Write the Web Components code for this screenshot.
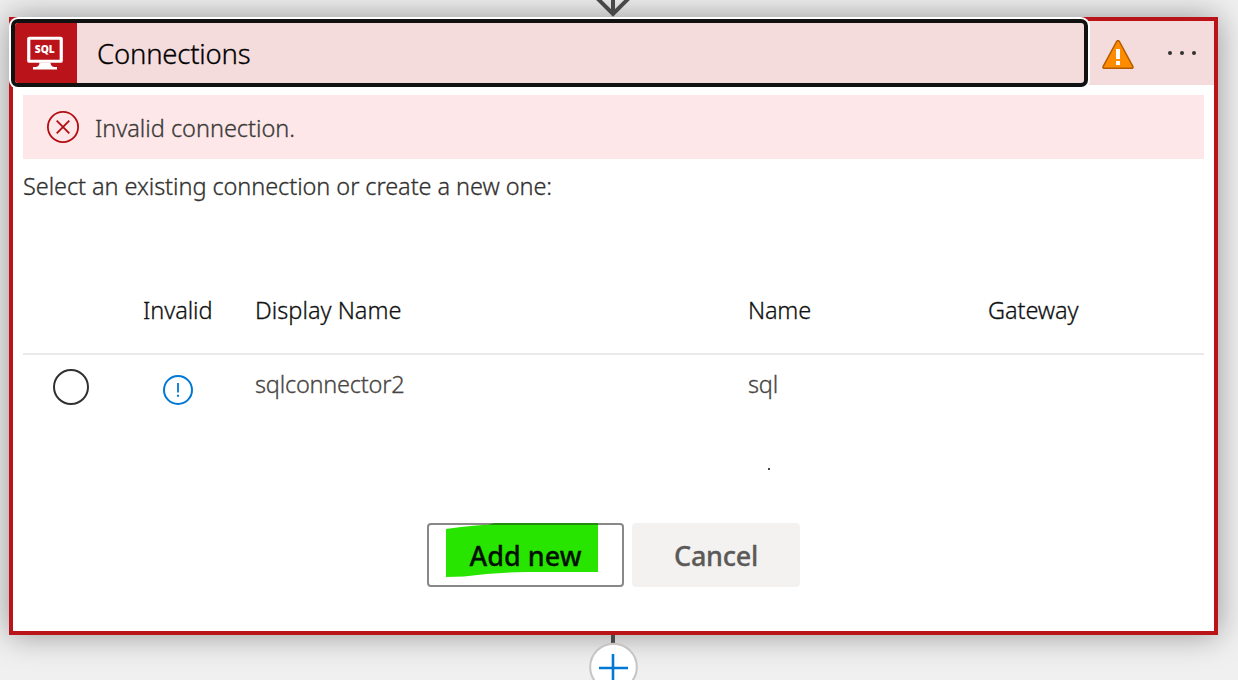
<!DOCTYPE html>
<html lang="en">
<head>
<meta charset="utf-8">
<title>Connections</title>
<style>
html,body{margin:0;height:680px;overflow:hidden;background:#f0f0f0}
body{font-family:"Noto Sans","Open Sans",sans-serif;color:#323130}
</style>
</head>
<body>
<flow-canvas></flow-canvas>
<script>
const define = (name, html, setup) => customElements.define(name, class extends HTMLElement {
  connectedCallback() {
    if (this.shadowRoot) return;
    const t = document.createElement('template');
    t.innerHTML = html;
    this.attachShadow({mode: 'open'}).appendChild(t.content.cloneNode(true));
    if (setup) setup(this);
  }
});

/* A single line label; its tracking is spread so that it takes the given width. */
define('ui-label', `<style>
  :host{display:block;white-space:pre;font-size:23.5px;line-height:32px;font-weight:300;-webkit-text-stroke:.3px currentColor}
  :host([size=l]){font-size:27.5px;line-height:36px}
  :host([size=b]){font-size:27px;line-height:36px;font-weight:500}
  span{display:inline-block}
</style><span><slot></slot></span>`, el => {
  const s = el.shadowRoot.querySelector('span');
  const w = parseFloat(el.getAttribute('width'));
  if (w) s.style.letterSpacing = (w - s.getBoundingClientRect().width) / el.textContent.length + 'px';
});

define('sql-icon', `<style>:host{display:block;width:62px;height:60px;background:#ba141a}svg{display:block}
  text{font:800 10.5px "Open Sans","Noto Sans",sans-serif;fill:#fff}</style>
  <svg width="62" height="60" viewBox="15 23 62 60">
    <rect x="28.75" y="38.25" width="32.5" height="23" rx=".6" fill="none" stroke="#fff" stroke-width="3.2"/>
    <path d="M39.5 62.5H50.5Q50.6 66.2 54 67H57V69.5H33V67H36Q39.400 66.200 39.500 62.500Z" fill="#fff"/>
    <text x="34.800" y="53" textLength="20" lengthAdjust="spacingAndGlyphs">SQL</text>
  </svg>`);

define('warning-icon', `<style>:host{display:block;width:32px;height:30px}svg{display:block}</style>
  <svg width="32" height="30" viewBox="1102 40 32 30">
    <path d="M1116.6 41.500Q1118 39.600 1119.400 41.500L1132.800 66.300Q1133.500 68.200 1131.500 68.300H1104.500Q1102.500 68.200 1103.200 66.300Z" fill="#ff8c00" stroke="#b35a00" stroke-width="1.5" stroke-linejoin="round"/>
    <path d="M1116 49h4v10h-4zM1116 61h4v4h-4z" fill="#fff"/>
  </svg>`);

define('more-icon', `<style>:host{display:block;width:30px;height:6px}svg{display:block}</style>
  <svg width="30" height="6"><g fill="#323130"><circle cx="3" cy="3" r="2"/><circle cx="15" cy="3" r="2"/><circle cx="27" cy="3" r="2"/></g></svg>`);

define('card-header', `<style>
  :host{display:flex;height:64px;align-items:center;background:#f4dcdc}
  .title{box-sizing:border-box;width:1077px;height:68px;margin-left:-2px;flex:none;display:flex;border:4px solid #111;border-radius:7px;box-shadow:0 0 0 2px #fff;background:#f4dcdc;overflow:hidden;position:relative;color:#000}
  ui-label{margin:13px 0 0 20px}
  warning-icon{margin:4px 0 0 14px}
  more-icon{margin:0 0 0 33px}
</style>
<div class="title"><sql-icon></sql-icon><ui-label size="l" width="153.5">Connections</ui-label></div>
<warning-icon></warning-icon><more-icon></more-icon>`);

define('error-bar', `<style>
  :host{display:flex;align-items:center;height:64px;background:#fde7e9;color:#3b3a39}
  svg{margin-left:23px}slot{display:block;margin:2px 0 0 15px}
</style>
<svg width="34" height="34"><g fill="none" stroke="#b30c10" stroke-width="1.800"><circle cx="17" cy="17" r="15.100"/><path d="M10.700 10.700L23.300 23.300M23.300 10.700L10.700 23.300"/></g></svg>
<slot></slot>`);

define('connection-table', `<style>
  :host{display:block;padding-top:67px}
  .row{display:grid;grid-template-columns:120px 112px 493px 240px 1fr}
  .head{color:#111;height:86px;border-bottom:2px solid #eaeaea;padding-top:25px;box-sizing:border-box}
  .body{height:168px;color:#484644;padding-top:13px;box-sizing:border-box}
  .radio{display:block;margin-left:29px}
  .info{margin:6px 0 0 19px;display:block}
  .dot{width:2px;height:2px;margin:68px 0 0 20px;background:#444}
</style>
<div class="row head"><span></span><ui-label width="69.5">Invalid</ui-label><ui-label width="146.500">Display Name</ui-label><ui-label width="63">Name</ui-label><ui-label width="90.500">Gateway</ui-label></div>
<div class="row body">
  <svg class="radio" width="38" height="38"><circle cx="19" cy="19" r="17" fill="none" stroke="#323130" stroke-width="2"/></svg>
  <svg class="info" width="32" height="32"><circle cx="16" cy="16" r="14" fill="none" stroke="#0078d4" stroke-width="2"/><path d="M15.100 9h1.800v9.500h-1.800zM15 20.800h2v2h-2z" fill="#0078d4"/></svg>
  <ui-label width="149.500">sqlconnector2</ui-label>
  <div><ui-label width="30">sql</ui-label><div class="dot"></div></div><span></span>
</div>`);

define('ui-button', `<style>
  :host{box-sizing:border-box;position:relative;display:flex;align-items:center;justify-content:center;height:64px;width:168px;border-radius:4px;background:#f3f2f1;color:#5c5a58}
  :host([outlined]){width:197px;background:#fff;border:2px solid #8a8886;color:#001000}
  slot{display:block}slot[name=mark]{position:absolute;left:17px;top:-2px}
  slot:not([name]){position:relative;padding-top:2px}
</style><slot name="mark"></slot><slot></slot>`);

define('marker-stroke', `<style>:host{display:block}svg{display:block}</style>
<svg width="152" height="56"><path d="M0 6Q30 1.500 60 1H152V49H80Q48 49.500 18 53.600L0 54Z" fill="#28e500"/><path d="M48 0H152V2H42Z" fill="#278a10"/></svg>`);

define('connection-card', `<style>
  :host{display:block;box-sizing:border-box;width:1209px;height:618px;border:4px solid #ba141a;background:#fff;box-shadow:0 0 30px rgba(0,0,0,.38)}
  main{padding:10px 10px 0}
  .prompt{margin-top:11px}
  footer{display:flex;gap:8px;margin-left:404px}
</style>
<card-header></card-header>
<main><error-bar><ui-label width="200">Invalid connection.</ui-label></error-bar>
<ui-label class="prompt" width="529">Select an existing connection or create a new one:</ui-label>
<connection-table></connection-table>
<footer><ui-button outlined><marker-stroke slot="mark"></marker-stroke><ui-label size="b" width="112">Add new</ui-label></ui-button><ui-button><ui-label size="b" width="84">Cancel</ui-label></ui-button></footer></main>`);

define('flow-canvas', `<style>
  :host{display:flex;flex-direction:column;height:680px;overflow:hidden}
  svg{display:block;flex:none;position:relative}
  .arrow{margin-left:593px;z-index:1}
  connection-card{margin-left:9px;flex:none}
  .add{margin-left:588px}
</style>
<svg class="arrow" width="40" height="17"><path d="M20 0V14M4 -2L20 14L36 -2" fill="none" stroke="#484848" stroke-width="4"/></svg>
<connection-card></connection-card>
<svg class="add" width="50" height="60"><path d="M25 0V9" stroke="#484848" stroke-width="4"/><circle cx="25.500" cy="32" r="23.300" fill="#fff" stroke="#c8c4c2" stroke-width="2"/><path d="M11 33H40M25 19V48" stroke="#0078d4" stroke-width="2.600"/></svg>`);
</script>
</body>
</html>
